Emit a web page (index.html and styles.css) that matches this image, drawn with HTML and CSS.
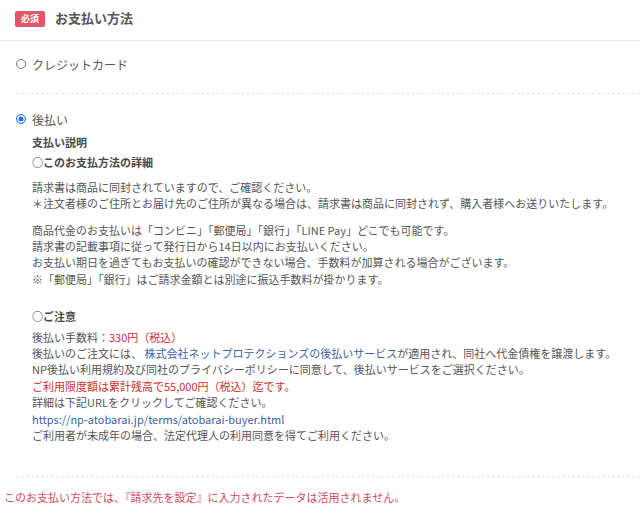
FILE: index.html
```html
<!DOCTYPE html>
<html lang="ja">
<head>
<meta charset="utf-8">
<link rel="stylesheet" href="styles.css">
</head>
<body>
<div class="page">
  <div class="header">
    <span class="badge">必須</span>
    <span class="title">お支払い方法</span>
  </div>
  <div class="methods">
    <div class="option first">
      <span class="radio"></span>
      <span class="opt-label">クレジットカード</span>
    </div>
    <div class="sep"></div>
    <div class="option">
      <span class="radio checked"></span>
      <span class="opt-label">後払い</span>
    </div>
    <div class="desc">
      <p class="bold h1">支払い説明</p>
      <p class="bold h2">○このお支払方法の詳細</p>
      <p class="para">請求書は商品に同封されていますので、ご確認ください。<br>＊注文者様のご住所とお届け先のご住所が異なる場合は、請求書は商品に同封されず、購入者様へお送りいたします。</p>
      <p class="para">商品代金のお支払いは「コンビニ」「郵便局」「銀行」「LINE Pay」どこでも可能です。<br>請求書の記載事項に従って発行日から14日以内にお支払いください。<br>お支払い期日を過ぎてもお支払いの確認ができない場合、手数料が加算される場合がございます。<br>※「郵便局」「銀行」はご請求金額とは別途に振込手数料が掛かります。</p>
      <p class="bold h3">○ご注意</p>
      <p class="para last">後払い手数料：<span class="red">330円（税込）</span><br>後払いのご注文には、 <span class="blue">株式会社ネットプロテクションズの後払いサービス</span>が適用され、同社へ代金債権を譲渡します。<br>NP後払い利用規約及び同社のプライバシーポリシーに同意して、後払いサービスをご選択ください。<br><span class="red">ご利用限度額は累計残高で55,000円（税込）迄です。</span><br>詳細は下記URLをクリックしてご確認ください。<br><span class="blue">https://np-atobarai.jp/terms/atobarai-buyer.html</span><br>ご利用者が未成年の場合、法定代理人の利用同意を得てご利用ください。</p>
    </div>
    <div class="sep bottom"></div>
    <p class="note">このお支払い方法では、『請求先を設定』に入力されたデータは活用されません。</p>
  </div>
</div>
</body>
</html>
```
FILE: styles.css
```css
html, body {
  margin: 0;
  padding: 0;
  background: #ffffff;
}
body {
  font-family: "Noto Sans CJK JP", "Noto Sans", sans-serif;
  color: #555555;
  font-size: 11px;
}
.header {
  display: flex;
  align-items: center;
  height: 40px;
  padding: 0 15px;
  border-bottom: 1px solid #e6e9ea;
}
.badge {
  display: inline-flex;
  align-items: center;
  justify-content: center;
  width: 30px;
  height: 16px;
  background: #e0566a;
  color: #ffffff;
  border-radius: 2px;
  font-size: 9px;
  font-weight: bold;
  margin-right: 10px;
  margin-top: -3px;
}
.title {
  font-size: 13px;
  font-weight: bold;
  color: #555555;
  margin-top: -5px;
}
.methods {
  padding: 0 0 0 16px;
}
.option {
  display: flex;
  align-items: center;
  height: 16px;
}
.option.first {
  margin-top: 15px;
}
.radio {
  width: 10px;
  height: 10px;
  border: 1px solid #777777;
  border-radius: 50%;
  box-sizing: border-box;
  margin-right: 6px;
  flex: none;
}
.radio.checked {
  border: 1px solid #1a73e8;
  background: #1a73e8;
  box-shadow: inset 0 0 0 1.5px #ffffff;
}
.opt-label {
  font-size: 12px;
  color: #555555;
}
.sep {
  border-top: 1px dashed #e3e3e3;
  margin: 21px 0 17px 0;
}
.desc {
  padding-left: 16px;
  padding-top: 7px;
}
.desc p {
  margin: 0;
  line-height: 16.4px;
}
.bold {
  font-weight: bold;
  color: #4a4a4a;
}
.h1 {
  margin-bottom: 4px !important;
}
.h2 {
  margin-bottom: 8px !important;
}
.para {
  margin-bottom: 10px !important;
}
.h3 {
  margin-top: 21px !important;
  margin-bottom: 4px !important;
}
.para.last {
  margin-bottom: 0 !important;
}
.red {
  color: #d0312d;
}
.blue {
  color: #3d5f9e;
}
.sep.bottom {
  margin: 32px 0 0 0;
}
.note {
  margin: 12px 0 0 -12px;
  color: #d14a5a;
  font-size: 11px;
}
```
